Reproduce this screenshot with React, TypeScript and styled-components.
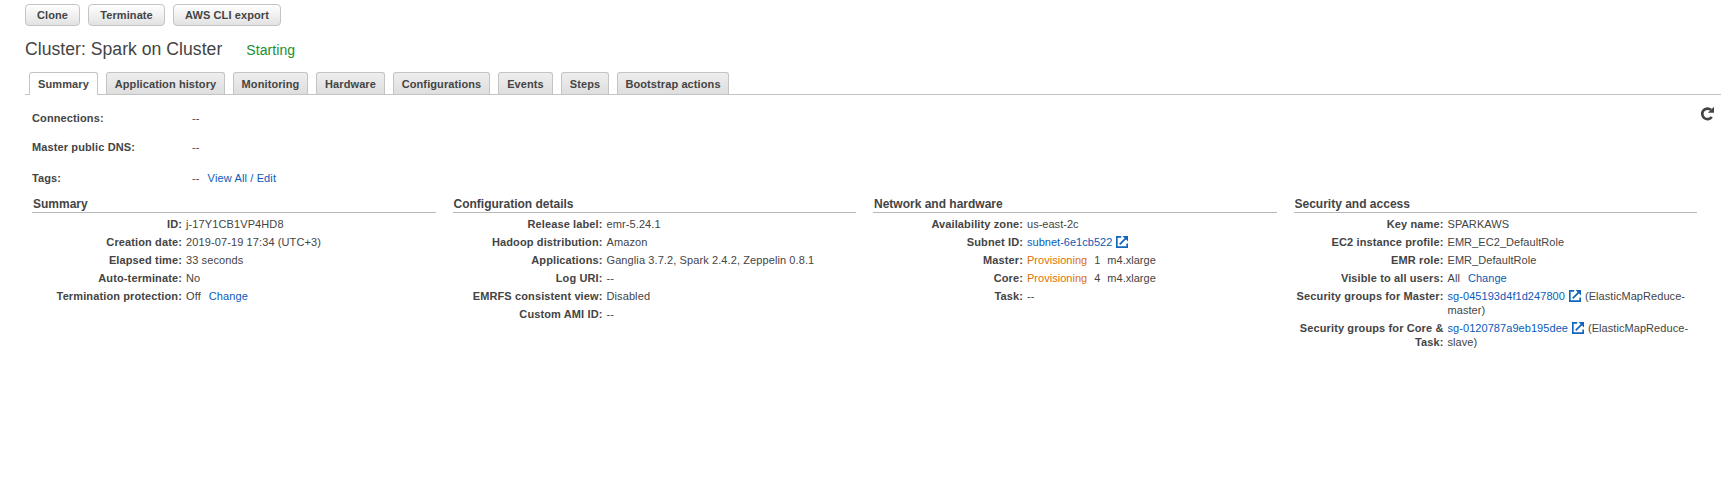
import React from "react";
import styled, { createGlobalStyle } from "styled-components";

const GlobalStyle = createGlobalStyle`
  body {
    margin: 0;
    background: #fff;
    color: #444;
    font: 11px/14px "Liberation Sans", Arial, sans-serif;
  }
`;

const Page = styled.main`
  box-sizing: border-box;
  width: 1726px;
  height: 485px;
  padding: 4px 5px 0 25px;
`;

const Toolbar = styled.div`
  display: flex;
  gap: 8px;
`;

const Button = styled.button<{ $width: number }>`
  box-sizing: border-box;
  width: ${(p) => p.$width}px;
  height: 22px;
  padding: 0;
  border: 1px solid #c4c4c4;
  border-radius: 4px;
  background: linear-gradient(#fff, #e2e2e2);
  color: #444;
  font: bold 11px/20px "Liberation Sans", Arial, sans-serif;
  letter-spacing: 0.1px;
  white-space: nowrap;
`;

const TitleRow = styled.header`
  display: flex;
  align-items: baseline;
  gap: 24px;
  height: 46px;
  line-height: 46px;
`;

const Title = styled.h1`
  margin: 0;
  font-size: 17.6px;
  font-weight: normal;
  letter-spacing: 0.03px;
`;

const Status = styled.span`
  color: #1a8f2d;
  font-size: 14px;
  letter-spacing: 0.08px;
`;

const TabBar = styled.nav`
  display: flex;
  gap: 8px;
  height: 22px;
  padding-left: 4px;
  border-bottom: 1px solid #c4c4c4;
`;

const Tab = styled.a<{ $width: number; $active?: boolean }>`
  box-sizing: border-box;
  width: ${(p) => p.$width}px;
  height: ${(p) => (p.$active ? 23 : 22)}px;
  border: 1px solid #c4c4c4;
  border-bottom: 0;
  border-radius: 3px 3px 0 0;
  background: ${(p) => (p.$active ? "#fff" : "linear-gradient(#eee, #dedede)")};
  font-weight: bold;
  letter-spacing: 0.1px;
  line-height: 23px;
  text-align: center;
  white-space: nowrap;
`;

const Overview = styled.section`
  display: flex;
  justify-content: space-between;
  height: 102px;
  padding: 0 6px 0 7px;
`;

const Facts = styled.dl`
  display: grid;
  grid-template-columns: 160px auto;
  grid-template-rows: 29px 31px 30px;
  margin: 16px 0 0;
`;

const FactName = styled.dt`
  font-weight: bold;
  letter-spacing: 0.12px;
`;

const FactValue = styled.dd`
  display: flex;
  gap: 8px;
  margin: 0;
  letter-spacing: 0.14px;
`;

const Refresh = styled.svg`
  width: 15px;
  height: 15px;
  margin-top: 11px;
`;

const Columns = styled.div`
  display: grid;
  grid-template-columns: repeat(4, 403.5px);
  column-gap: 17px;
  align-items: start;
  padding-left: 7px;
`;

const Heading = styled.h2`
  height: 15px;
  margin: 0 0 4px;
  padding-left: 1px;
  border-bottom: 1px solid #b8b8b8;
  font-size: 12px;
  line-height: 14px;
`;

const Row = styled.div`
  display: grid;
  grid-template-columns: 150px 1fr;
  column-gap: 4px;
  margin-bottom: 4px;
`;

const Label = styled.div`
  font-weight: bold;
  letter-spacing: 0.12px;
  text-align: right;
`;

const Value = styled.div<{ $spacing: number }>`
  letter-spacing: ${(p) => p.$spacing}px;
`;

const Link = styled.a`
  color: #0b5ab8;
`;

const Provisioning = styled.span`
  color: #e07000;
`;

const Gap = styled.span<{ $size: number }>`
  display: inline-block;
  width: ${(p) => p.$size}px;
`;

const LinkIcon = styled.svg`
  width: 12px;
  height: 12px;
  margin: 0 4px -2px 4px;
`;

const External = () => (
  <LinkIcon viewBox="0 0 12 12" fill="none" stroke="#1166bb">
    <path d="M5.2.8H.8v10.4h10.4V7.5M3.7 8.3l6-6" strokeWidth="1.7" />
    <path d="M6.5 0H12v5.5z" fill="#1166bb" stroke="none" />
  </LinkIcon>
);

const tabs: [string, number][] = [
  ["Summary", 69],
  ["Application history", 119],
  ["Monitoring", 75],
  ["Hardware", 69],
  ["Configurations", 97],
  ["Events", 55],
  ["Steps", 48],
  ["Bootstrap actions", 112],
];

const Pool = ({ count }: { count: number }) => (
  <>
    <Provisioning>Provisioning</Provisioning>
    <Gap $size={7} />
    {count}
    <Gap $size={7} />
    m4.xlarge
  </>
);

const sections: { title: string; spacing: number; rows: [string, React.ReactNode][] }[] = [
  {
    title: "Summary",
    spacing: 0.11,
    rows: [
      ["ID:", "j-17Y1CB1VP4HD8"],
      ["Creation date:", "2019-07-19 17:34 (UTC+3)"],
      ["Elapsed time:", "33 seconds"],
      ["Auto-terminate:", "No"],
      ["Termination protection:", <>Off<Gap $size={8} /><Link>Change</Link></>],
    ],
  },
  {
    title: "Configuration details",
    spacing: 0.1,
    rows: [
      ["Release label:", "emr-5.24.1"],
      ["Hadoop distribution:", "Amazon"],
      ["Applications:", "Ganglia 3.7.2, Spark 2.4.2, Zeppelin 0.8.1"],
      ["Log URI:", "--"],
      ["EMRFS consistent view:", "Disabled"],
      ["Custom AMI ID:", "--"],
    ],
  },
  {
    title: "Network and hardware",
    spacing: 0.02,
    rows: [
      ["Availability zone:", "us-east-2c"],
      ["Subnet ID:", <><Link>subnet-6e1cb522</Link><External /></>],
      ["Master:", <Pool count={1} />],
      ["Core:", <Pool count={4} />],
      ["Task:", "--"],
    ],
  },
  {
    title: "Security and access",
    spacing: 0.06,
    rows: [
      ["Key name:", "SPARKAWS"],
      ["EC2 instance profile:", "EMR_EC2_DefaultRole"],
      ["EMR role:", "EMR_DefaultRole"],
      ["Visible to all users:", <>All<Gap $size={8} /><Link>Change</Link></>],
      ["Security groups for Master:", <><Link>sg-045193d4f1d247800</Link><External />(ElasticMapReduce-<br />master)</>],
      ["Security groups for Core & Task:", <><Link>sg-0120787a9eb195dee</Link><External />(ElasticMapReduce-<br />slave)</>],
    ],
  },
];

export default function App() {
  return (
    <Page>
      <GlobalStyle />
      <Toolbar>
        <Button $width={55}>Clone</Button>
        <Button $width={77}>Terminate</Button>
        <Button $width={108}>AWS CLI export</Button>
      </Toolbar>
      <TitleRow>
        <Title>Cluster: Spark on Cluster</Title>
        <Status>Starting</Status>
      </TitleRow>
      <TabBar>
        {tabs.map(([name, width], i) => (
          <Tab key={name} $width={width} $active={i === 0}>{name}</Tab>
        ))}
      </TabBar>
      <Overview>
        <Facts>
          <FactName>Connections:</FactName>
          <FactValue>--</FactValue>
          <FactName>Master public DNS:</FactName>
          <FactValue>--</FactValue>
          <FactName>Tags:</FactName>
          <FactValue>--<Link>View All / Edit</Link></FactValue>
        </Facts>
        <Refresh viewBox="0 0 15 15">
          <path d="M11 3.8A5.3 5.3 0 1 0 11.8 11" fill="none" stroke="#444" strokeWidth="2.7" />
          <path d="M14 .8v6H8z" fill="#444" />
        </Refresh>
      </Overview>
      <Columns>
        {sections.map((section) => (
          <section key={section.title}>
            <Heading>{section.title}</Heading>
            {section.rows.map(([label, value]) => (
              <Row key={label}>
                <Label>{label}</Label>
                <Value $spacing={section.spacing}>{value}</Value>
              </Row>
            ))}
          </section>
        ))}
      </Columns>
    </Page>
  );
}
